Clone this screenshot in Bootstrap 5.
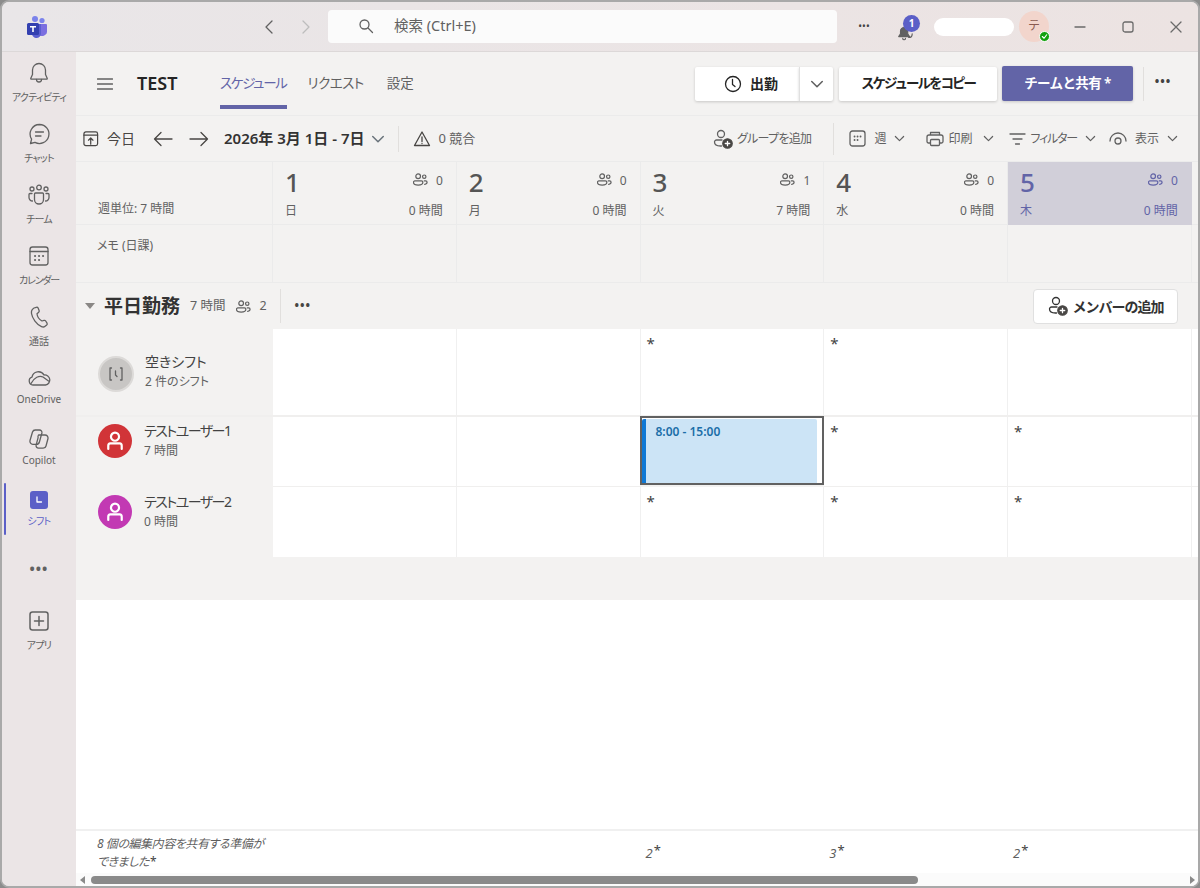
<!DOCTYPE html>
<html lang="ja">
<head>
  <meta charset="UTF-8" />
  <meta name="viewport" content="width=device-width, initial-scale=1" />
  <title>TEST - シフト</title>
  <link href="https://cdn.jsdelivr.net/npm/bootstrap@5.3.2/dist/css/bootstrap.min.css" rel="stylesheet"/>
  <style>
    body {
      margin: 0;
      width: 1200px;
      height: 888px;
      overflow: hidden;
      background: #8c8c8c;
      font-family: "Noto Sans", "Noto Sans CJK JP", sans-serif;
      font-feature-settings: "palt";
      color: #424242;
    }
    svg { display: block; fill: none; stroke: currentColor; stroke-width: 1.3; stroke-linecap: round; stroke-linejoin: round; flex: none; }
    .win { height: 888px; border: 2px solid #a9a9a9; border-radius: 9px; overflow: hidden; background: #ebe5e6; }
    /* the reference's kana run narrower than Noto's, even with palt */
    .tight-1 { letter-spacing: -.7px; }
    .tight-2 { letter-spacing: -1.2px; }
    .tight-3 { letter-spacing: -1.5px; }

    /* title bar */
    .titlebar { height: 50px; border-bottom: 1px solid #dcd8d8; background: linear-gradient(90deg, #e9e6e8, #ece3e2); }
    .tb-logo { width: 64px; padding-left: 24px; }
    .tb-nav { color: #616161; margin-left: 197px; width: 49px; }
    .tb-nav .off { color: #bdbdbd; }
    .searchbox { width: 509px; height: 33px; background: #fbfbfb; border-radius: 4px; padding-left: 30px; gap: 20px; font-size: 14.5px; color: #616161; margin-top: -1px; }
    .tb-more { width: 54px; text-align: center; color: #424242; font-size: 10px; }
    .bell-wrap { width: 28px; height: 30px; color: #616161; padding-left: 5px; }
    .bell-count { position: absolute; top: 3px; left: 12px; width: 17px; height: 17px; border-radius: 50%; background: #5b5fc7; color: #fff; font-size: 10px; font-weight: 700; line-height: 17px; text-align: center; }
    .name-pill { width: 80px; height: 18px; background: #fff; border-radius: 9px; margin-left: 15px; }
    .me-avatar { width: 30px; height: 31px; border-radius: 50%; background: #f2d5cc; margin-left: 5px; font-size: 12px; color: #8a5a50; line-height: 30px; text-align: center; }
    .me-status { position: absolute; right: -1px; bottom: 0; width: 11px; height: 11px; border-radius: 50%; background: #13a10e; border: 1px solid #fff; color: #fff; }
    .win-btns { margin-left: 25px; gap: 36px; color: #6a6a6a; }

    /* left rail */
    .rail { width: 74px; flex: none; padding-top: 4px; background: #ebe5e6; }
    .rail-item { height: 61px; padding-top: 5px; color: #616161; font-size: 10px; line-height: 16px; gap: 4px; }
    .rail-item.latin { gap: 1px; }
    .rail-item.on { color: #5b5fc7; gap: 1px; }
    .rail-bar { position: absolute; left: 2px; top: 0; width: 2px; height: 52px; background: #5b5fc7; border-radius: 1px; }
    .rail-more { height: 48px; color: #616161; font-size: 14px; font-weight: 700; letter-spacing: 1px; }
    .rail-apps { margin-top: 12px; }
    .shift-square { width: 18px; height: 18px; margin: 3px 0; background: #5b5fc7; border-radius: 3px; color: #fff; }

    /* main */
    .pane { background: #f3f2f1; min-width: 0; }
    .pagehead { height: 64px; border-bottom: 1px solid #ebebeb; padding-left: 21px; }
    .hamb { color: #616161; margin-right: 24px; }
    .teamname { font-size: 18px; font-weight: 600; color: #242424; margin-right: 42px; width: 41px; white-space: nowrap; }
    .tabs { gap: 21px; height: 100%; align-items: center; font-size: 13.5px; color: #616161; letter-spacing: -.5px; }
    .tabs span { position: relative; }
    .tabs .on { color: #6264a7; letter-spacing: -1.3px; }
    .tabs .on::after { content: ""; position: absolute; left: 0; right: 0; top: 32px; height: 4px; background: #6264a7; }
    .tabs .plain { letter-spacing: 0; margin-left: 2px; }
    .tbtn { height: 34px; background: #fff; border: 0; border-radius: 2px; box-shadow: 0 1px 3px rgba(0,0,0,.18); font-size: 14px; font-weight: 600; color: #242424; }
    .tbtn-clock { width: 104px; gap: 8px; border-radius: 2px 0 0 2px; padding-left: 14px; }
    .tbtn-caret { width: 34px; border-left: 1px solid #e0e0e0; border-radius: 0 2px 2px 0; color: #616161; margin-right: 6px; }
    .tbtn-copy { width: 158px; margin-right: 5px; font-size: 13.5px; letter-spacing: -2px; }
    .tbtn-share { width: 131px; height: 35px; background: #6264a7; color: #fff; font-size: 13.5px; letter-spacing: -.6px; }
    .vsep { width: 1px; background: #e1dfdd; }
    .head-sep { height: 34px; margin-left: 10px; }
    .head-more { width: 54px; color: #424242; font-weight: 700; font-size: 12px; letter-spacing: 1px; padding-right: 16px; }

    .toolrow { height: 46px; border-bottom: 1px solid #ebebeb; font-size: 14px; padding-left: 7px; color: #484644; }
    .toolrow .sm { font-size: 13px; color: #616161; }
    .daterange { font-weight: 600; font-size: 15px; color: #333; margin: 0 7px 0 15px; white-space: nowrap; }
    .date-sep { height: 26px; margin: 0 14px 0 13px; }
    .warn-ico { margin-right: 7px; }
    .tool-right { color: #616161; font-size: 12px; padding-right: 20px; }
    .tool-sep { height: 32px; margin: 0 15px 0 22px; }
    .print-caret { margin-left: 11px; }

    .sched { display: grid; grid-template-columns: 197px repeat(5, 183.75px) 1fr; }
    .sched > div { min-width: 0; }
    .dayhead { height: 63px; border-right: 1px solid #ebebeb; border-bottom: 1px solid #ebebeb; padding: 4px 13px 0 12px; font-size: 12px; color: #616161; }
    .dayhead .num { font-size: 26px; font-weight: 500; color: #555; line-height: 33px; }
    .dayhead .ppl { gap: 8px; padding-top: 6px; }
    .dayhead .low { margin-top: 3px; line-height: 18px; }
    .dayhead.today { background: #d1cfd9; color: #6264a7; border-color: #d1cfd9; }
    .dayhead.today .num { color: #6264a7; }
    .sidehead { height: 63px; border-right: 1px solid #ebebeb; border-bottom: 1px solid #ebebeb; padding: 38px 0 0 22px; font-size: 12px; color: #616161; line-height: 18px; }
    .memocell { height: 58px; border-right: 1px solid #ebebeb; border-bottom: 1px solid #ebebeb; padding: 12px 0 0 21px; font-size: 12px; color: #616161; line-height: 18px; }
    .grouprow { height: 46px; padding: 0 20px 0 9px; }
    .tri { width: 0; height: 0; border-left: 5px solid transparent; border-right: 5px solid transparent; border-top: 6px solid #8a8886; margin-right: 9px; }
    .grpname { font-size: 19px; font-weight: 700; color: #333; margin-right: 10px; }
    .grpmeta { font-size: 12.5px; color: #616161; gap: 11px; }
    .grp-sep { height: 34px; margin: 0 14px 0 13px; }
    .grp-more { font-weight: 700; letter-spacing: 1px; color: #484644; font-size: 12px; }
    .addmember { width: 145px; height: 35px; background: #fff; border: 1px solid #e0e0e0; border-radius: 4px; font-size: 14px; font-weight: 600; color: #333; gap: 5px; letter-spacing: -1px; }

    .who { padding-left: 22px; gap: 12px; }
    .who-up { padding-bottom: 20px; }
    .who-up2 { padding-bottom: 22px; }
    .who-name { font-size: 14px; line-height: 20px; color: #424242; white-space: nowrap; }
    .who-sub { font-size: 12px; line-height: 20px; color: #616161; white-space: nowrap; }
    .who-pic { width: 34px; height: 34px; border-radius: 50%; color: #fff; }
    .who-pic.open { width: 36px; height: 36px; background: #c8c6c4; border: 2px solid #dcdad8; color: #616161; margin: 3px -1px 0 0; }
    .who-pic.red { background: #d13438; }
    .who-pic.pink { background: #c239b3; }
    .slot { background: #fff; border-right: 1px solid #f0f0f0; padding: 4px 0 0 6px; font-size: 15px; line-height: 20px; color: #424242; }
    .sep-a { border-bottom: 2px solid #f0efee; }
    .sep-b { border-bottom: 1px solid #f0efee; }
    .h88 { height: 88px; }
    .h70 { height: 70px; }
    .slot.picked { border: 2px solid #616161; padding: 1px 5px 0 0; background: #fff; height: 69px; margin: -1px 0 0 -1px; }
    .shiftblock { height: 64px; background: #cce4f6; border-left: 4px solid #0f78d4; border-radius: 2px 2px 0 0; padding: 3px 0 0 10px; font-size: 12px; font-weight: 600; line-height: 20px; color: #1b6ea8; }
    .gray-gap { height: 43px; }
    .sheet { background: #fff; }
    .totals { height: 44px; background: #fff; border-top: 2px solid #f0f0f0; font-style: italic; font-size: 12px; color: #5f5f5f; line-height: 18px; }
    .totals > div { padding-top: 4px; }
    .totals .first { padding-left: 21px; white-space: nowrap; letter-spacing: -.45px; }
    .totals .cnt { padding-top: 13px; padding-left: 5px; font-size: 13px; }
    .totals sup { font-size: 13px; top: -.2em; color: #424242; font-style: normal; margin-left: 1px; }
    .flat-star { color: #424242; font-style: normal; margin-left: 1px; }
    .hscroll { height: 13px; background: #fbfbfb; gap: 4px; padding: 0 3px 0 4px; }
    .hscroll .left { width: 0; height: 0; border-top: 4px solid transparent; border-bottom: 4px solid transparent; border-right: 5px solid #8a8a8a; }
    .hscroll .right { width: 0; height: 0; border-top: 4px solid transparent; border-bottom: 4px solid transparent; border-left: 5px solid #8a8a8a; margin-left: auto; }
    .thumb { width: 827px; height: 8px; background: #8a8a8a; border-radius: 4px; margin-left: 2px; }
  </style>
</head>
<body>

  <svg width="0" height="0" class="position-absolute">
    <defs>
      <symbol id="i-people" viewBox="0 0 16 16"><circle cx="5.5" cy="4.5" r="2.5"/><path d="M2 9.5h7a1.5 1.5 0 0 1 1.500 1.500c0 2-2 3-5 3s-5-1-5-3A1.500 1.500 0 0 1 2 9.500z"/><circle cx="12" cy="5" r="1.800"/><path d="M12 9.500h1.500a1.500 1.500 0 0 1 1.500 1.500c0 1.300-1 2-2.500 2.200"/></symbol>
      <symbol id="i-chev" viewBox="0 0 12 12"><path d="M1.500 3.800 6 8.300l4.500-4.500"/></symbol>
      <symbol id="i-useradd" viewBox="0 0 20 20"><circle cx="8" cy="5" r="3.500"/><path d="M9 11H3.500A2 2 0 0 0 1.500 13c0 2.500 2.500 4 6 4h1"/><circle cx="14.500" cy="14.500" r="4.700" fill="#484644" stroke="#484644"/><path d="M14.500 12.300v4.400M12.300 14.500h4.400" stroke="#fff"/></symbol>
      <symbol id="i-user" viewBox="0 0 18 18"><circle cx="9" cy="5.500" r="3.300" stroke-width="1.800"/><path d="M3.500 15.500v-2.700A1.800 1.800 0 0 1 5.200 11h7.600a1.800 1.800 0 0 1 1.700 1.800v2.700" stroke-width="1.800"/></symbol>
    </defs>
  </svg>

  <div class="win d-flex flex-column">

    <div class="titlebar d-flex align-items-center flex-none">
      <div class="tb-logo">
        <svg width="22" height="23" viewBox="0 0 22 23" style="stroke:none">
          <circle cx="9" cy="4" r="3" fill="#7b83eb"/>
          <circle cx="16" cy="5.500" r="2.600" fill="#7b83eb"/>
          <path d="M12 9h8a1 1 0 0 1 1 1v7a5 5 0 0 1-8 3z" fill="#7b6fe0"/>
          <path d="M6 9h9v9a4.500 4.500 0 0 1-9 1z" fill="#5a5fd0"/>
          <rect x="1" y="8" width="12" height="12" rx="1.500" fill="#3340b0"/>
          <path d="M4 11h6v1.500H7.800V17H6.200v-4.500H4z" fill="#fff"/>
        </svg>
      </div>
      <div class="tb-nav d-flex justify-content-between">
        <svg width="12" height="16" viewBox="0 0 12 16"><path d="M9 2 3 8l6 6"/></svg>
        <svg class="off" width="12" height="16" viewBox="0 0 12 16"><path d="m3 2 6 6-6 6"/></svg>
      </div>
      <div class="searchbox d-flex align-items-center ms-3">
        <svg width="16" height="16" viewBox="0 0 16 16"><circle cx="6.500" cy="6.500" r="4.500"/><path d="m10 10 4.500 4.500"/></svg>
        <span>検索 (Ctrl+E)</span>
      </div>
      <div class="tb-more">•••</div>
      <div class="bell-wrap position-relative d-flex align-items-end">
        <svg width="18" height="18" viewBox="0 0 20 20"><path d="M9 4a4 4 0 0 0-4 4v3l-2 3h12l-2-3V8a4 4 0 0 0-4-4z" fill="currentColor"/><path d="M7.500 16a1.500 1.500 0 0 0 3 0"/><path d="M14 15c2 0 4-1.500 4-4"/></svg>
        <span class="bell-count">1</span>
      </div>
      <div class="name-pill"></div>
      <div class="me-avatar position-relative">テ
        <span class="me-status d-flex align-items-center justify-content-center">
          <svg width="7" height="7" viewBox="0 0 8 8" stroke-width="1.500"><path d="m1.500 4 2 2 3-4"/></svg>
        </span>
      </div>
      <div class="win-btns d-flex align-items-center">
        <svg width="12" height="12" viewBox="0 0 12 12"><path d="M1 6h10"/></svg>
        <svg width="12" height="12" viewBox="0 0 12 12"><rect x="1" y="1" width="10" height="10" rx="2"/></svg>
        <svg width="12" height="12" viewBox="0 0 12 12"><path d="m1 1 10 10M11 1 1 11"/></svg>
      </div>
    </div>

    <div class="d-flex flex-grow-1" style="min-height:0">
      <nav class="rail d-flex flex-column">
        <div class="rail-item d-flex flex-column align-items-center">
          <svg width="24" height="24" viewBox="0 0 24 24"><path d="M12 2.500a6.500 6.500 0 0 0-6.500 6.500v4.500L3.800 17.200a.7.700 0 0 0 .6 1h15.200a.7.700 0 0 0 .6-1L18.500 13.500V9A6.500 6.500 0 0 0 12 2.500z"/><path d="M9.500 18.500a2.500 2.500 0 0 0 5 0"/></svg>
          <span class="tight-1">アクティビティ</span>
        </div>
        <div class="rail-item d-flex flex-column align-items-center">
          <svg width="24" height="24" viewBox="0 0 24 24"><path d="M12.500 2.500a9.500 9.500 0 1 1-4.500 17.900L3.500 21.500l1.100-4.400A9.500 9.500 0 0 1 12.500 2.500z"/><path d="M8.500 10h8M8.500 14h5.500"/></svg>
          <span class="tight-1">チャット</span>
        </div>
        <div class="rail-item d-flex flex-column align-items-center">
          <svg width="24" height="24" viewBox="0 0 24 24"><circle cx="12" cy="4.500" r="2.300"/><circle cx="5" cy="6" r="2"/><circle cx="19" cy="6" r="2"/><path d="M8.500 10h7a1 1 0 0 1 1 1v5.500a4.500 4.500 0 0 1-9 0V11a1 1 0 0 1 1-1z"/><path d="M5 10.500H3a1 1 0 0 0-1 1v3a3.500 3.500 0 0 0 3.500 3.500M19 10.500h2a1 1 0 0 1 1 1v3a3.500 3.500 0 0 1-3.500 3.500"/></svg>
          <span class="tight-1">チーム</span>
        </div>
        <div class="rail-item d-flex flex-column align-items-center">
          <svg width="24" height="24" viewBox="0 0 24 24"><rect x="3" y="3" width="18" height="18" rx="2.500"/><path d="M3 7.500h18"/><path d="M8 12h.1M12 12h.1M16 12h.1M8 16h.1M12 16h.1" stroke-width="2"/></svg>
          <span class="tight-2">カレンダー</span>
        </div>
        <div class="rail-item d-flex flex-column align-items-center">
          <svg width="24" height="24" viewBox="0 0 24 24"><path d="m7 3 2.300-.7a1.500 1.500 0 0 1 1.800.8l1 2.500a1.500 1.500 0 0 1-.4 1.700L10 8.800c.3 2.800 2.600 6 5 7.200l2-.6a1.500 1.500 0 0 1 1.700.6l1.300 2.100a1.500 1.500 0 0 1-.3 1.900l-1.600 1.300c-1 .8-2.500.8-3.600.3C9.500 19.500 5.300 13.500 4.500 8.500 4.200 6.500 5.300 4 7 3z"/></svg>
          <span>通話</span>
        </div>
        <div class="rail-item latin d-flex flex-column align-items-center">
          <svg width="24" height="24" viewBox="0 0 24 24"><path d="M6 19a4 4 0 0 1-1-7.800A6.500 6.500 0 0 1 17 9a5 5 0 0 1 1.500 10z"/><path d="M4 17.500c3-6 8.500-8.500 12-6.500l5.500 4"/></svg>
          <span>OneDrive</span>
        </div>
        <div class="rail-item latin d-flex flex-column align-items-center">
          <svg width="24" height="24" viewBox="0 0 24 24"><path d="M8.500 3h4a2.500 2.500 0 0 1 2.400 3l-2.500 9a3 3 0 0 1-3 2.300H6A3 3 0 0 1 3 13.500L5.500 5a3 3 0 0 1 3-2z"/><path d="M11.500 8h6.500a3 3 0 0 1 3 3.500l-2 7.500a3 3 0 0 1-3 2.200h-4.500a2.500 2.500 0 0 1-2.400-3l2-7.500a3.500 3.500 0 0 1 .4-2.700z"/></svg>
          <span>Copilot</span>
        </div>
        <div class="rail-item on d-flex flex-column align-items-center position-relative">
          <span class="rail-bar"></span>
          <span class="shift-square d-flex align-items-center justify-content-center">
            <svg width="10" height="10" viewBox="0 0 10 10" stroke-width="1.500"><path d="M3 2v5h4.500"/></svg>
          </span>
          <span class="tight-1">シフト</span>
        </div>
        <div class="rail-more d-flex align-items-center justify-content-center">•••</div>
        <div class="rail-item rail-apps d-flex flex-column align-items-center">
          <svg width="24" height="24" viewBox="0 0 24 24"><rect x="3" y="3" width="18" height="18" rx="2.500" stroke-width="1.500"/><path d="M12 7.500v9M7.500 12h9" stroke-width="1.500"/></svg>
          <span class="tight-1">アプリ</span>
        </div>
      </nav>

      <main class="pane flex-grow-1 d-flex flex-column">
        <div class="pagehead d-flex align-items-center">
          <svg class="hamb" width="16" height="14" viewBox="0 0 16 14"><path d="M.5 2h15M.5 7h15M.5 12h15"/></svg>
          <div class="teamname">TEST</div>
          <div class="tabs d-flex">
            <span class="on">スケジュール</span>
            <span>リクエスト</span>
            <span class="plain">設定</span>
          </div>
          <div class="d-flex align-items-center ms-auto">
            <button class="tbtn tbtn-clock d-flex align-items-center justify-content-center">
              <svg width="18" height="18" viewBox="0 0 18 18"><circle cx="9" cy="9" r="7.500"/><path d="M8.500 4.500V9.500l2.500 2"/></svg>出勤
            </button>
            <button class="tbtn tbtn-caret d-flex align-items-center justify-content-center"><svg width="14" height="14"><use href="#i-chev"/></svg></button>
            <button class="tbtn tbtn-copy">スケジュールをコピー</button>
            <button class="tbtn tbtn-share">チームと共有 *</button>
            <div class="vsep head-sep"></div>
            <div class="head-more text-center pb-1">•••</div>
          </div>
        </div>

        <div class="toolrow d-flex align-items-center">
          <svg class="me-2" width="16" height="16" viewBox="0 0 17 17"><rect x="1" y="1" width="14.500" height="14.500" rx="2"/><path d="M1 4.500h14.500M8.200 14V7.500M5.800 9.800l2.400-2.400 2.400 2.400"/></svg>
          <span>今日</span>
          <svg style="margin-left:18px" width="20" height="16" viewBox="0 0 20 16"><path d="M19 8H1.500M8 1.500 1.500 8 8 14.500"/></svg>
          <svg class="ms-3" width="20" height="16" viewBox="0 0 20 16"><path d="M1 8h17.500M12 1.500 18.500 8 12 14.500"/></svg>
          <span class="daterange">2026年 3月 1日 - 7日</span>
          <svg width="14" height="14" class="text-secondary"><use href="#i-chev"/></svg>
          <div class="vsep date-sep"></div>
          <svg class="warn-ico" width="18" height="18" viewBox="0 0 18 18"><path d="M9 2 1.500 15.500h15z"/><path d="M9 7v4.500M9 13.500v.1"/></svg>
          <span class="sm">0 競合</span>
          <div class="tool-right d-flex align-items-center ms-auto">
            <svg width="20" height="20"><use href="#i-useradd"/></svg>
            <span class="ms-1 tight-1">グループを追加</span>
            <div class="vsep tool-sep"></div>
            <svg width="17" height="17" viewBox="0 0 17 17"><rect x="1" y="1" width="15" height="15" rx="2.500"/><path d="M5.500 6.500h.1M8.500 6.500h.1M11.500 6.500h.1M5.500 10h.1M8.500 10h.1" stroke-width="1.800"/></svg>
            <span class="ms-2">週</span>
            <svg class="ms-2" width="11" height="11"><use href="#i-chev"/></svg>
            <svg style="margin-left:21px" width="18" height="18" viewBox="0 0 18 18"><path d="M4.500 5V2.500h9V5M4.500 13H2.500A1.500 1.500 0 0 1 1 11.500V7a2 2 0 0 1 2-2h12a2 2 0 0 1 2 2v4.500a1.500 1.500 0 0 1-1.500 1.500h-2"/><rect x="4.500" y="9.500" width="9" height="6" rx="1"/></svg>
            <span class="ms-1">印刷</span>
            <svg class="print-caret" width="11" height="11"><use href="#i-chev"/></svg>
            <svg style="margin-left:15px" width="17" height="14" viewBox="0 0 17 14"><path d="M1 2h15M4 7h9M6.500 12h4"/></svg>
            <span class="ms-1 tight-2">フィルター</span>
            <svg class="ms-2" width="11" height="11"><use href="#i-chev"/></svg>
            <svg style="margin-left:13px" width="18" height="14" viewBox="0 0 18 14"><path d="M1 9a8 8 0 0 1 16 0"/><circle cx="9" cy="9" r="3"/></svg>
            <span class="ms-2">表示</span>
            <svg class="ms-2" width="11" height="11"><use href="#i-chev"/></svg>
          </div>
        </div>

        <div class="sched">
          <div class="sidehead">週単位: 7 時間</div>
          <div class="dayhead">
            <div class="d-flex justify-content-between"><span class="num">1</span><span class="ppl d-flex"><svg width="15" height="15"><use href="#i-people"/></svg>0</span></div>
            <div class="low d-flex justify-content-between"><span>日</span><span>0 時間</span></div>
          </div>
          <div class="dayhead">
            <div class="d-flex justify-content-between"><span class="num">2</span><span class="ppl d-flex"><svg width="15" height="15"><use href="#i-people"/></svg>0</span></div>
            <div class="low d-flex justify-content-between"><span>月</span><span>0 時間</span></div>
          </div>
          <div class="dayhead">
            <div class="d-flex justify-content-between"><span class="num">3</span><span class="ppl d-flex"><svg width="15" height="15"><use href="#i-people"/></svg>1</span></div>
            <div class="low d-flex justify-content-between"><span>火</span><span>7 時間</span></div>
          </div>
          <div class="dayhead">
            <div class="d-flex justify-content-between"><span class="num">4</span><span class="ppl d-flex"><svg width="15" height="15"><use href="#i-people"/></svg>0</span></div>
            <div class="low d-flex justify-content-between"><span>水</span><span>0 時間</span></div>
          </div>
          <div class="dayhead today">
            <div class="d-flex justify-content-between"><span class="num">5</span><span class="ppl d-flex"><svg width="15" height="15"><use href="#i-people"/></svg>0</span></div>
            <div class="low d-flex justify-content-between"><span>木</span><span>0 時間</span></div>
          </div>
          <div class="dayhead border-end-0"></div>

          <div class="memocell">メモ (日課)</div>
          <div class="memocell"></div>
          <div class="memocell"></div>
          <div class="memocell"></div>
          <div class="memocell"></div>
          <div class="memocell"></div>
          <div class="memocell border-end-0"></div>
        </div>

        <div class="grouprow d-flex align-items-center">
          <span class="tri"></span>
          <span class="grpname">平日勤務</span>
          <span class="grpmeta d-flex align-items-center">7 時間 <span class="d-flex align-items-center gap-2"><svg width="15" height="15"><use href="#i-people"/></svg>2</span></span>
          <div class="vsep grp-sep"></div>
          <span class="grp-more">•••</span>
          <button class="addmember d-flex align-items-center justify-content-center ms-auto">
            <svg width="20" height="20"><use href="#i-useradd"/></svg>メンバーの追加
          </button>
        </div>

        <div class="sched">
          <div class="who h88 sep-a d-flex align-items-center">
            <div class="who-pic open d-flex align-items-center justify-content-center">
              <svg width="18" height="18" viewBox="0 0 18 18"><path d="M4.500 3H3v12h1.500M13.500 3H15v12h-1.500M8.500 6v4l1.500 1.500"/></svg>
            </div>
            <div><div class="who-name">空きシフト</div><div class="who-sub">2 件のシフト</div></div>
          </div>
          <div class="slot h88 sep-a"></div>
          <div class="slot h88 sep-a"></div>
          <div class="slot h88 sep-a">*</div>
          <div class="slot h88 sep-a">*</div>
          <div class="slot h88 sep-a"></div>
          <div class="slot h88 sep-a border-end-0"></div>

          <div class="who who-up2 h70 d-flex align-items-center">
            <div class="who-pic red d-flex align-items-center justify-content-center"><svg width="22" height="22"><use href="#i-user"/></svg></div>
            <div><div class="who-name tight-3">テストユーザー1</div><div class="who-sub">7 時間</div></div>
          </div>
          <div class="slot h70 sep-b"></div>
          <div class="slot h70 sep-b"></div>
          <div class="slot picked">
            <div class="shiftblock">8:00 - 15:00</div>
          </div>
          <div class="slot h70 sep-b">*</div>
          <div class="slot h70 sep-b">*</div>
          <div class="slot h70 sep-b border-end-0"></div>

          <div class="who who-up h70 d-flex align-items-center">
            <div class="who-pic pink d-flex align-items-center justify-content-center"><svg width="22" height="22"><use href="#i-user"/></svg></div>
            <div><div class="who-name tight-3">テストユーザー2</div><div class="who-sub">0 時間</div></div>
          </div>
          <div class="slot h70"></div>
          <div class="slot h70"></div>
          <div class="slot h70">*</div>
          <div class="slot h70">*</div>
          <div class="slot h70">*</div>
          <div class="slot h70 border-end-0"></div>
        </div>

        <div class="gray-gap"></div>
        <div class="sheet flex-grow-1"></div>

        <div class="sched totals">
          <div class="first">8 個の編集内容を共有する準備が<br>できました<span class="flat-star">*</span></div>
          <div></div>
          <div></div>
          <div class="cnt">2<sup>*</sup></div>
          <div class="cnt">3<sup>*</sup></div>
          <div class="cnt">2<sup>*</sup></div>
          <div></div>
        </div>
        <div class="hscroll d-flex align-items-center">
          <span class="left"></span>
          <span class="thumb"></span>
          <span class="right"></span>
        </div>
      </main>
    </div>
  </div>

  <script src="https://cdn.jsdelivr.net/npm/bootstrap@5.3.2/dist/js/bootstrap.bundle.min.js"></script>
</body>
</html>
